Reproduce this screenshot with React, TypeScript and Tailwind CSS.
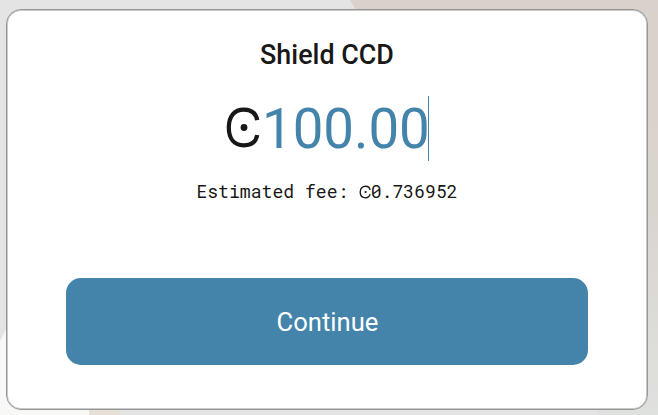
function Ccd({ className }: { className: string }) {
  return (
    <svg viewBox="0 0 34 41" className={className} fill="none" aria-label="CCD">
      <path d="M31.2 13.2 C30 6.2 25 2.6 17.8 2.6 C8.4 2.6 2.8 9.2 2.8 20.5 C2.8 31.8 8.4 38.4 17.8 38.4 C25 38.4 30 34.8 31.2 28" stroke="currentColor" strokeWidth="4.2" />
      <circle cx="18" cy="20.5" r="3.4" fill="currentColor" />
    </svg>
  );
}

function SmallCcd() {
  return (
    <svg viewBox="0 0 12 14" className="mb-[1px] ml-[-0.5px] h-[14px] w-[12px] shrink-0" fill="none" aria-label="CCD">
      <path d="M11.1 4.8C10.6 2.4 9 1.2 6.6 1.2C3.3 1.2 1.2 3.5 1.2 7C1.2 10.5 3.3 12.8 6.6 12.8C9 12.8 10.6 11.6 11.1 9.2" stroke="currentColor" strokeWidth="1.35" />
      <circle cx="6.6" cy="7" r="1.1" fill="currentColor" />
    </svg>
  );
}

function Background() {
  return (
    <svg className="absolute inset-0 h-full w-full" viewBox="0 0 658 415" preserveAspectRatio="none">
      <defs>
        <linearGradient id="side" x1="0" y1="0" x2="0" y2="1">
          <stop offset="0" stopColor="#d9d1cb" />
          <stop offset="0.5" stopColor="#dad4cf" />
          <stop offset="1" stopColor="#dfe1de" />
        </linearGradient>
      </defs>
      <path d="M0 0H658V415H0Z" fill="#e4e4e4" />
      <path d="M350 0H658V415H600Z" fill="url(#side)" />
      <path d="M0 341L8 326V400H89V415H0Z" fill="#f8f8f7" />
      <path d="M89 405H120V415H89Z" fill="#e6e0d8" />
    </svg>
  );
}

export default function App() {
  return (
    <div className="relative h-[415px] w-[658px] overflow-hidden pl-[6px] pt-[9px] font-['Roboto',sans-serif] text-[#181818]">
      <Background />
      <main className="relative flex h-[401px] w-[642px] flex-col items-center rounded-[15px] border border-[#969696] bg-white shadow-[inset_0_0_0_1px_#cacaca]">
        <h1 className="mt-[29px] pt-px text-[26.9px] font-medium leading-[31px]">Shield CCD</h1>
        <div className="mt-[25px] flex h-[65px] w-[204px] items-center">
          <Ccd className="mb-[3px] ml-[1px] h-[41px] w-[34px] shrink-0" />
          <span className="ml-[2px] w-[166px] pt-[2px] text-[54.6px] leading-[63px] text-[#4484ab]">100.00</span>
          <span className="h-[65px] w-px shrink-0 bg-[#4484ab]" />
        </div>
        <p className="mt-[19px] flex h-6 items-center whitespace-pre font-['Roboto_Mono','Liberation_Mono',monospace] text-[18.1px]">
          <span>Estimated fee: </span>
          <SmallCcd />
          <span>0.736952</span>
        </p>
        <button className="mt-[74px] h-[87px] w-[522px] rounded-[15px] bg-[#4484ab] pt-[1px] pl-[1px] text-[25.6px] text-white">Continue</button>
      </main>
    </div>
  );
}
